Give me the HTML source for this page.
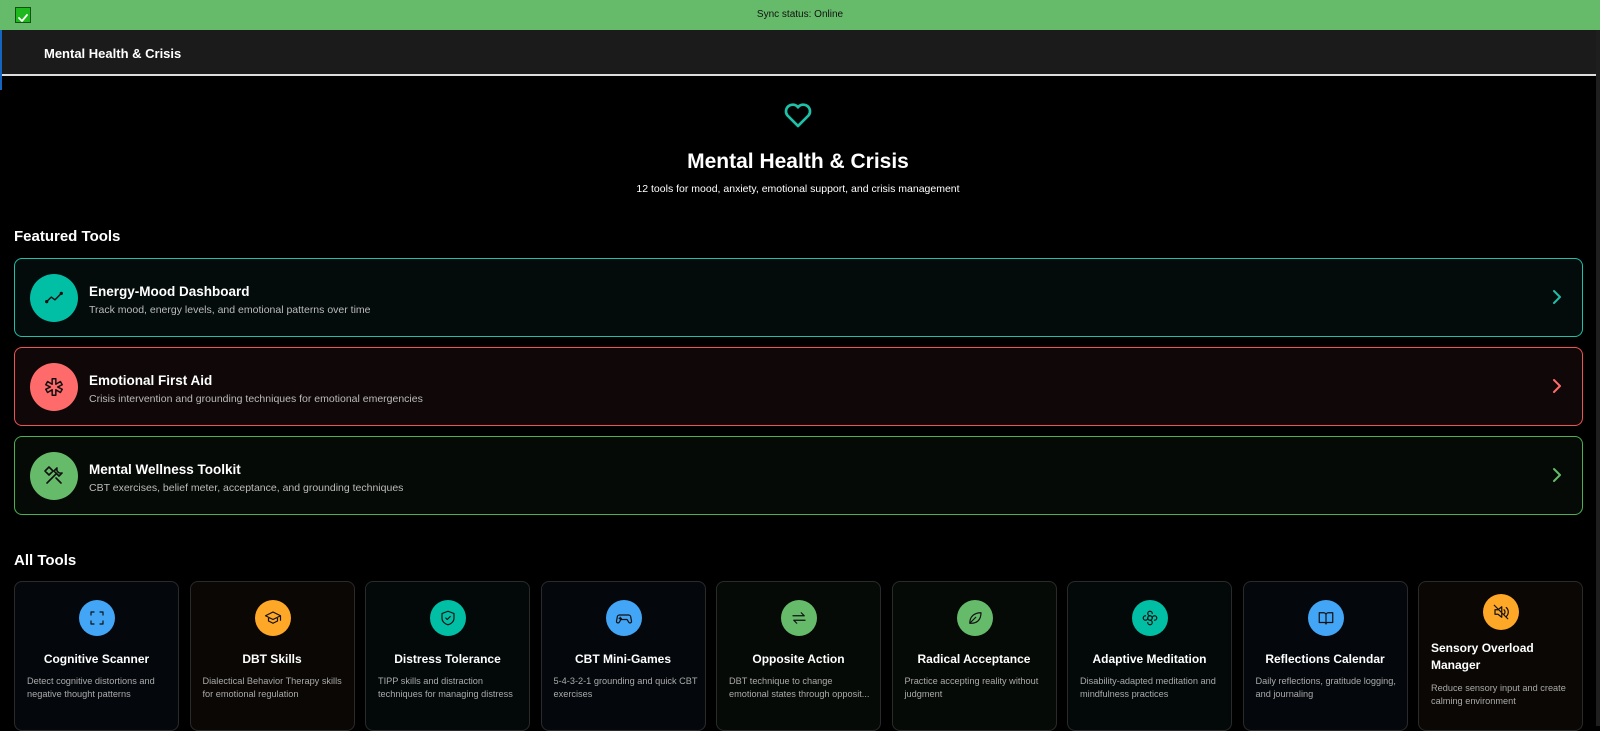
<!DOCTYPE html>
<html><head><meta charset="utf-8"><style>
*{box-sizing:border-box;margin:0;padding:0}
body{width:1600px;height:726px;overflow:hidden;background:#000;font-family:"Liberation Sans",sans-serif;color:#fff;position:relative}
.sync{position:absolute;left:0;top:0;width:1600px;height:30px;background:#66bb6a;font-size:10px;color:#111;text-align:center;line-height:30px}
.chk{position:absolute;left:15px;top:7px;width:16px;height:16px;background:#1fb81f;border:1px solid #145214}
.hdr{position:absolute;left:2px;top:30px;width:1594px;height:46px;background:#1b1b1b;border-bottom:2px solid #ddd}
.hdr span{position:absolute;left:42px;top:16px;font-size:13px;font-weight:bold}
.lb{position:absolute;left:0;top:30px;width:2px;height:60px;background:#1565c0}
.rs{position:absolute;left:1596px;top:30px;width:4px;height:696px;background:#1e1e1e}
.hero{position:absolute;left:0;width:1596px;text-align:center}
h2{position:absolute;left:14px;font-size:15px;font-weight:bold}
.f{position:absolute;left:14px;width:1569px;height:79px;border:1px solid;border-radius:8px}
.f .c{position:absolute;left:15px;top:15px;width:48px;height:48px;border-radius:50%;display:flex;align-items:center;justify-content:center}
.f b{position:absolute;left:74px;top:25px;font-size:13.5px}
.f i{position:absolute;left:74px;top:45px;font-size:10.5px;font-style:normal;color:#bbb}
.f .ar{position:absolute;right:18px;top:30px}
.t{position:absolute;top:581px;width:165px;height:150px;border:1px solid #2a2a2a;border-radius:8px;text-align:center}
.t .c{position:absolute;left:64px;top:18px;width:36px;height:36px;border-radius:50%;display:flex;align-items:center;justify-content:center}
.t b{position:absolute;left:4px;right:4px;top:70px;font-size:12px}
.t i{position:absolute;left:12px;right:6px;top:93px;font-size:9.2px;font-style:normal;color:#aaa;text-align:left;line-height:13px}
svg{fill:none;stroke:#111;stroke-width:1.6;stroke-linecap:round;stroke-linejoin:round}
</style></head><body>
<div class="sync"><div class="chk"><svg width="14" height="14" viewBox="0 0 14 14" style="stroke:#fff;stroke-width:1.8"><path d="M3 7l3 3 5-6"/></svg></div>Sync status: Online</div>
<div class="hdr"><span>Mental Health &amp; Crisis</span></div><div class="lb"></div><div class="rs"></div>
<div class="hero" style="top:99px"><svg width="32" height="30" viewBox="0 0 24 22" style="stroke:#1ec0a8;stroke-width:2"><path d="M12 20l-8-8a5 5 0 0 1 8-6a5 5 0 0 1 8 6z"/></svg></div>
<div class="hero" style="top:150px;font-size:21px;font-weight:bold">Mental Health &amp; Crisis</div>
<div class="hero" style="top:183px;font-size:10.5px">12 tools for mood, anxiety, emotional support, and crisis management</div>
<h2 style="top:228px">Featured Tools</h2>
<div class="f" style="top:258px;border-color:#1ec0a8;background:#030b0b"><div class="c" style="background:#00bfa5"><svg width="22" height="22" viewBox="0 0 24 24"><path d="M4 16l5-5 4 3 7-7"/><circle cx="4" cy="16" r="1"/><circle cx="20" cy="7" r="1"/></svg></div><b>Energy-Mood Dashboard</b><i>Track mood, energy levels, and emotional patterns over time</i><svg class="ar" width="14" height="16" viewBox="0 0 14 16" style="stroke:#1ec0a8;stroke-width:2"><path d="M4 2l6 6-6 6"/></svg></div>
<div class="f" style="top:347px;border-color:#ef5350;background:#100808"><div class="c" style="background:#ff6b6b"><svg width="22" height="22" viewBox="0 0 24 24"><path d="M10 3h4v6l5-3 2 3.5-5 2.5 5 2.5-2 3.5-5-3v6h-4v-6l-5 3-2-3.5 5-2.5-5-2.5 2-3.5 5 3z"/></svg></div><b>Emotional First Aid</b><i>Crisis intervention and grounding techniques for emotional emergencies</i><svg class="ar" width="14" height="16" viewBox="0 0 14 16" style="stroke:#ff6b6b;stroke-width:2"><path d="M4 2l6 6-6 6"/></svg></div>
<div class="f" style="top:436px;border-color:#4caf50;background:#060a06"><div class="c" style="background:#66bb6a"><svg width="24" height="24" viewBox="0 0 24 24"><path d="M5 19l9-9M3 7l4-4 4 4-4 4zM14 14l5 5M15 4a4 4 0 0 0 5 5l-3 3-5-5z"/></svg></div><b>Mental Wellness Toolkit</b><i>CBT exercises, belief meter, acceptance, and grounding techniques</i><svg class="ar" width="14" height="16" viewBox="0 0 14 16" style="stroke:#66bb6a;stroke-width:2"><path d="M4 2l6 6-6 6"/></svg></div>
<h2 style="top:552px">All Tools</h2>
<div class="t" style="left:14px;background:#04080c"><div class="c" style="background:#42a5f5"><svg width="18" height="18" viewBox="0 0 24 24"><path d="M4 8V4h4M16 4h4v4M20 16v4h-4M8 20H4v-4"/></svg></div><b>Cognitive Scanner</b><i>Detect cognitive distortions and negative thought patterns</i></div>
<div class="t" style="left:189.5px;background:#0a0704"><div class="c" style="background:#ffa726"><svg width="18" height="18" viewBox="0 0 24 24"><path d="M2 9l10-5 10 5-10 5zM6 11v5l6 3 6-3v-5M22 9v6"/></svg></div><b>DBT Skills</b><i>Dialectical Behavior Therapy skills for emotional regulation</i></div>
<div class="t" style="left:365px;background:#030909"><div class="c" style="background:#00bfa5"><svg width="18" height="18" viewBox="0 0 24 24"><path d="M12 3l8 3v6c0 5-4 8-8 9-4-1-8-4-8-9V6zM9 12l2 2 4-4"/></svg></div><b>Distress Tolerance</b><i>TIPP skills and distraction techniques for managing distress</i></div>
<div class="t" style="left:540.5px;background:#04080c"><div class="c" style="background:#42a5f5"><svg width="18" height="18" viewBox="0 0 24 24"><path d="M6 8h12a3 3 0 0 1 3 3l1 5a2 2 0 0 1-4 1l-2-3H8l-2 3a2 2 0 0 1-4-1l1-5a3 3 0 0 1 3-3zM7 11v3M5.5 12.5h3"/></svg></div><b>CBT Mini-Games</b><i>5-4-3-2-1 grounding and quick CBT exercises</i></div>
<div class="t" style="left:716px;background:#060a06"><div class="c" style="background:#66bb6a"><svg width="18" height="18" viewBox="0 0 24 24"><path d="M4 9h15l-4-4M20 15H5l4 4"/></svg></div><b>Opposite Action</b><i style="white-space:nowrap;overflow:hidden;right:10px">DBT technique to change<br>emotional states through opposit...</i></div>
<div class="t" style="left:891.5px;background:#060a06"><div class="c" style="background:#66bb6a"><svg width="18" height="18" viewBox="0 0 24 24"><path d="M5 19c0-9 6-14 15-14 0 9-5 14-13 14zM5 19l8-8"/></svg></div><b>Radical Acceptance</b><i>Practice accepting reality without judgment</i></div>
<div class="t" style="left:1067px;background:#030909"><div class="c" style="background:#00bfa5"><svg width="18" height="18" viewBox="0 0 24 24"><circle cx="12" cy="12" r="3"/><path d="M12 9a3 3 0 1 1 3-3M15 12a3 3 0 1 1 3 3M12 15a3 3 0 1 1-3 3M9 12a3 3 0 1 1-3-3"/></svg></div><b>Adaptive Meditation</b><i>Disability-adapted meditation and mindfulness practices</i></div>
<div class="t" style="left:1242.5px;background:#04080c"><div class="c" style="background:#42a5f5"><svg width="18" height="18" viewBox="0 0 24 24"><path d="M3 5h6a3 3 0 0 1 3 3v12a2 2 0 0 0-2-2H3zM21 5h-6a3 3 0 0 0-3 3v12a2 2 0 0 1 2-2h7z"/></svg></div><b>Reflections Calendar</b><i>Daily reflections, gratitude logging, and journaling</i></div>
<div class="t" style="left:1418px;background:#0a0704"><div class="c" style="background:#ffa726;top:12px"><svg width="18" height="18" viewBox="0 0 24 24"><path d="M4 9h4l5-4v14l-5-4H4zM16 9a4 4 0 0 1 0 6M19 6a8 8 0 0 1 0 12M3 3l18 18"/></svg></div><b style="text-align:left;left:12px;top:58px;font-size:12px;line-height:17px">Sensory Overload Manager</b><i style="top:100px">Reduce sensory input and create calming environment</i></div>
</body></html>
